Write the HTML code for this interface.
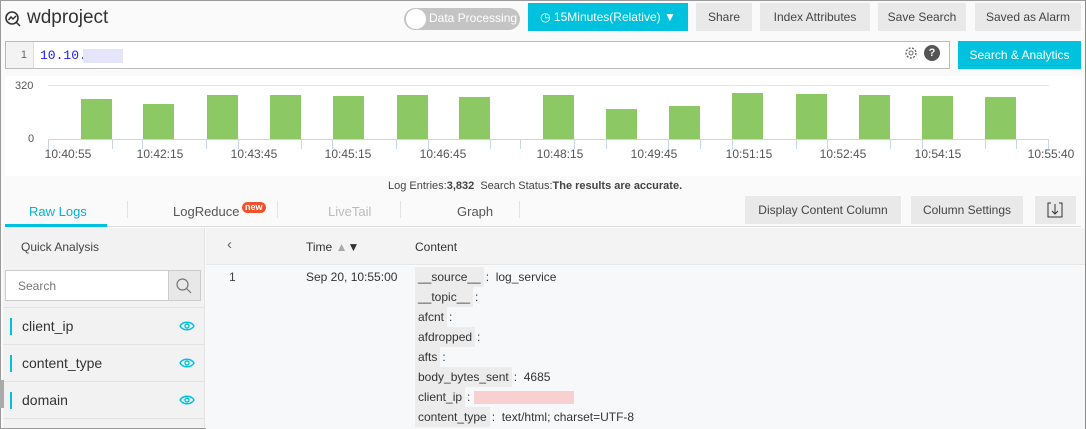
<!DOCTYPE html><html><head><style>
*{box-sizing:border-box;margin:0;padding:0}
body{width:1086px;height:429px;overflow:hidden;background:#fafafa;font-family:"Liberation Sans",sans-serif;position:relative;color:#333}
.a{position:absolute}
.btn{position:absolute;background:#e9e9e9;color:#444;font-size:12px;text-align:center;line-height:28px;height:28px}
.bar{position:absolute;background:#8cc864;width:31px}
.lbl{position:absolute;top:147px;font-size:12px;color:#555;width:60px;text-align:center;margin-left:-30px}
.tk{position:absolute;top:139px;width:1px;height:10px;background:#c9d5e8}
.fld{position:absolute;left:3px;width:202px;height:37px;border-bottom:1px solid #e3e3e3;font-size:14px;color:#333;line-height:36px;padding-left:19px}
.fld:before{content:"";position:absolute;left:7px;top:10px;width:2px;height:17px;background:#00c1de}
.eye{position:absolute;right:10px;top:12px}
.k{display:inline-block;background:#ececec;padding:1px 3px;margin-right:2px}
.kv{position:absolute;left:415px;font-size:12px;color:#333;height:20px;line-height:18px}
</style></head><body>
<div class="a" style="left:0;top:0;width:1086px;height:429px;border:1px solid #9a9a9a;border-right:none"></div>
<div class="a" style="left:1085px;top:0;width:1px;height:429px;background:#8a8a8a"></div>
<svg class="a" style="left:4px;top:10px" width="18" height="18" viewBox="0 0 18 18"><circle cx="8" cy="8" r="6" fill="none" stroke="#333" stroke-width="1.6"/><path d="M12.5 12.5L16 16M4.5 10L7 7l2 2 3-3" fill="none" stroke="#333" stroke-width="1.5"/></svg>
<div class="a" style="left:27px;top:7px;font-size:19px;color:#333">wdproject</div>
<div class="a" style="left:404px;top:8px;width:116px;height:22px;border-radius:11px;background:#c4c4c4"></div>
<div class="a" style="left:406px;top:9px;width:20px;height:20px;border-radius:10px;background:#fff"></div>
<div class="a" style="left:429px;top:11px;font-size:12px;color:#fff">Data Processing</div>
<div class="btn" style="left:528px;top:3px;width:160px;height:28px;background:#00c1de;color:#fff">&#9719; 15Minutes(Relative) &#9660;</div>
<div class="btn" style="left:696px;top:3px;width:56px">Share</div>
<div class="btn" style="left:760px;top:3px;width:110px">Index Attributes</div>
<div class="btn" style="left:878px;top:3px;width:88px">Save Search</div>
<div class="btn" style="left:975px;top:3px;width:106px">Saved as Alarm</div>
<div class="a" style="left:5px;top:41px;width:945px;height:28px;background:#fff;border:1px solid #bbb"></div>
<div class="a" style="left:6px;top:42px;width:28px;height:26px;background:#f3f3f3;border-right:1px solid #ddd;font-size:11px;color:#666;text-align:right;padding-right:6px;line-height:26px">1</div>
<div class="a" style="left:40px;top:48px;font-family:'Liberation Mono',monospace;font-size:13px;color:#1a1aff">10.10.</div>
<div class="a" style="left:83px;top:49px;width:40px;height:14px;background:#e4e4fb"></div>
<svg class="a" style="left:903px;top:45px" width="16" height="16" viewBox="0 0 16 16"><circle cx="8" cy="8" r="5" fill="none" stroke="#666" stroke-width="1.4" stroke-dasharray="2 1.5"/><circle cx="8" cy="8" r="2" fill="none" stroke="#666"/></svg>
<div class="a" style="left:924px;top:45px;width:16px;height:16px;border-radius:8px;background:#555;color:#fff;font-size:11px;font-weight:bold;text-align:center;line-height:16px">?</div>
<div class="btn" style="left:958px;top:41px;width:123px;height:28px;background:#00c1de;color:#fff">Search &amp; Analytics</div>
<div class="a" style="left:5px;top:76px;width:1076px;height:100px;background:#fff"></div>
<div class="a" style="left:48px;top:85px;width:1001px;height:1px;background:#e6e6e6"></div>
<div class="a" style="left:15px;top:80px;font-size:11px;color:#555">320</div>
<div class="a" style="left:28px;top:133px;font-size:11px;color:#555">0</div>
<div class="a" style="left:48px;top:139px;width:1001px;height:1px;background:#c9d5e8"></div>
<div class="bar" style="left:81px;top:99px;height:40px"></div>
<div class="bar" style="left:143px;top:104px;height:35px"></div>
<div class="bar" style="left:207px;top:95px;height:44px"></div>
<div class="bar" style="left:270px;top:95px;height:44px"></div>
<div class="bar" style="left:333px;top:96px;height:43px"></div>
<div class="bar" style="left:397px;top:95px;height:44px"></div>
<div class="bar" style="left:459px;top:97px;height:42px"></div>
<div class="bar" style="left:543px;top:95px;height:44px"></div>
<div class="bar" style="left:606px;top:109px;height:30px"></div>
<div class="bar" style="left:669px;top:106px;height:33px"></div>
<div class="bar" style="left:732px;top:93px;height:46px"></div>
<div class="bar" style="left:796px;top:94px;height:45px"></div>
<div class="bar" style="left:859px;top:95px;height:44px"></div>
<div class="bar" style="left:922px;top:96px;height:43px"></div>
<div class="bar" style="left:985px;top:97px;height:42px"></div>
<div class="tk" style="left:48px"></div><div class="tk" style="left:112px"></div><div class="tk" style="left:142px"></div><div class="tk" style="left:206px"></div><div class="tk" style="left:238px"></div><div class="tk" style="left:301px"></div><div class="tk" style="left:332px"></div><div class="tk" style="left:396px"></div><div class="tk" style="left:428px"></div><div class="tk" style="left:490px"></div><div class="tk" style="left:520px"></div><div class="tk" style="left:574px"></div><div class="tk" style="left:606px"></div><div class="tk" style="left:668px"></div><div class="tk" style="left:700px"></div><div class="tk" style="left:732px"></div><div class="tk" style="left:796px"></div><div class="tk" style="left:827px"></div><div class="tk" style="left:890px"></div><div class="tk" style="left:922px"></div><div class="tk" style="left:985px"></div><div class="tk" style="left:1016px"></div><div class="tk" style="left:1048px"></div>
<div class="lbl" style="left:68px">10:40:55</div><div class="lbl" style="left:160px">10:42:15</div><div class="lbl" style="left:254px">10:43:45</div><div class="lbl" style="left:348px">10:45:15</div><div class="lbl" style="left:443px">10:46:45</div><div class="lbl" style="left:560px">10:48:15</div><div class="lbl" style="left:654px">10:49:45</div><div class="lbl" style="left:749px">10:51:15</div><div class="lbl" style="left:843px">10:52:45</div><div class="lbl" style="left:938px">10:54:15</div><div class="lbl" style="left:1051px">10:55:40</div>
<div class="a" style="left:388px;top:180px;font-size:11px;color:#444">Log Entries:<b>3,832</b>&nbsp; Search Status:<b>The results are accurate.</b></div>
<div class="a" style="left:29px;top:204px;font-size:13px;color:#00b4d8">Raw Logs</div>
<div class="a" style="left:5px;top:224px;width:102px;height:3px;background:#00c1de"></div>
<div class="a" style="left:107px;top:226px;width:974px;height:1px;background:#ddd"></div>
<div class="a" style="left:127px;top:201px;width:1px;height:17px;background:#e3e3e3"></div>
<div class="a" style="left:173px;top:204px;font-size:13px;color:#555">LogReduce</div>
<div class="a" style="left:242px;top:202px;font-size:9px;background:#f0522e;color:#fff;border-radius:6px;padding:0 3px;line-height:11px;font-weight:bold">new</div>
<div class="a" style="left:277px;top:201px;width:1px;height:17px;background:#e3e3e3"></div>
<div class="a" style="left:328px;top:204px;font-size:13px;color:#bbb">LiveTail</div>
<div class="a" style="left:400px;top:201px;width:1px;height:17px;background:#e3e3e3"></div>
<div class="a" style="left:457px;top:204px;font-size:13px;color:#555">Graph</div>
<div class="a" style="left:519px;top:201px;width:1px;height:17px;background:#e3e3e3"></div>
<div class="btn" style="left:745px;top:196px;width:156px">Display Content Column</div>
<div class="btn" style="left:911px;top:196px;width:112px">Column Settings</div>
<div class="btn" style="left:1035px;top:196px;width:41px"></div>
<svg class="a" style="left:1047px;top:202px" width="16" height="16" viewBox="0 0 16 16"><path d="M4 1H1v14h14V1h-3M8 2v10M5 9l3 3 3-3" fill="none" stroke="#333"/></svg>
<div class="a" style="left:3px;top:228px;width:202px;height:200px;background:#f2f2f2;border-right:1px solid #e3e3e3"></div>
<div class="a" style="left:21px;top:240px;font-size:12px;color:#444">Quick Analysis</div>
<div class="a" style="left:5px;top:270px;width:196px;height:31px;background:#fff;border:1px solid #ccc"></div>
<div class="a" style="left:168px;top:271px;width:32px;height:29px;background:#e8e8e8;border-left:1px solid #ccc"></div>
<svg class="a" style="left:175px;top:277px" width="18" height="18" viewBox="0 0 18 18"><circle cx="7.5" cy="7.5" r="5.5" fill="none" stroke="#777" stroke-width="1.2"/><path d="M11.5 11.5L16 16" stroke="#777" stroke-width="1.2"/></svg>
<div class="a" style="left:18px;top:279px;font-size:12px;color:#777">Search</div>
<div class="a" style="left:3px;top:307px;width:202px;height:1px;background:#e3e3e3"></div>
<div class="fld" style="top:308px">client_ip<svg class="eye" width="16" height="12" viewBox="0 0 16 12"><path d="M1 6C4 1 12 1 15 6C12 11 4 11 1 6Z" fill="none" stroke="#00c1de" stroke-width="1.4"/><circle cx="8" cy="6" r="2" fill="none" stroke="#00c1de" stroke-width="1.4"/></svg></div>
<div class="fld" style="top:345px">content_type<svg class="eye" width="16" height="12" viewBox="0 0 16 12"><path d="M1 6C4 1 12 1 15 6C12 11 4 11 1 6Z" fill="none" stroke="#00c1de" stroke-width="1.4"/><circle cx="8" cy="6" r="2" fill="none" stroke="#00c1de" stroke-width="1.4"/></svg></div>
<div class="fld" style="top:382px">domain<svg class="eye" width="16" height="12" viewBox="0 0 16 12"><path d="M1 6C4 1 12 1 15 6C12 11 4 11 1 6Z" fill="none" stroke="#00c1de" stroke-width="1.4"/><circle cx="8" cy="6" r="2" fill="none" stroke="#00c1de" stroke-width="1.4"/></svg></div>
<div class="a" style="left:206px;top:228px;width:879px;height:37px;background:#f3f3f3;border-bottom:1px solid #e6e6e6"></div>
<div class="a" style="left:206px;top:266px;width:879px;height:163px;background:#f7f8fa"></div>
<div class="a" style="left:227px;top:236px;font-size:15px;color:#666">&#8249;</div>
<div class="a" style="left:306px;top:240px;font-size:12px;color:#333">Time <span style="color:#aaa;font-size:12px">&#9650;</span><span style="font-size:12px">&#9660;</span></div>
<div class="a" style="left:415px;top:240px;font-size:12px;color:#333">Content</div>
<div class="a" style="left:229px;top:270px;font-size:12px;color:#444">1</div>
<div class="a" style="left:306px;top:270px;font-size:12px;color:#333">Sep 20, 10:55:00</div>
<div class="kv" style="top:267px"><span class="k">__source__</span>:&nbsp; log_service</div>
<div class="kv" style="top:287px"><span class="k">__topic__</span>:</div>
<div class="kv" style="top:307px"><span class="k">afcnt</span>:</div>
<div class="kv" style="top:327px"><span class="k">afdropped</span>:</div>
<div class="kv" style="top:347px"><span class="k">afts</span>:</div>
<div class="kv" style="top:367px"><span class="k">body_bytes_sent</span>:&nbsp; 4685</div>
<div class="kv" style="top:387px"><span class="k">client_ip</span>: <span style="display:inline-block;width:100px;height:13px;background:#f9d0d0;vertical-align:middle"></span></div>
<div class="kv" style="top:407px"><span class="k">content_type</span>:&nbsp; text/html; charset=UTF-8</div>
<div class="a" style="left:0;top:380px;width:4px;height:28px;background:#aaa"></div>
</body></html>
